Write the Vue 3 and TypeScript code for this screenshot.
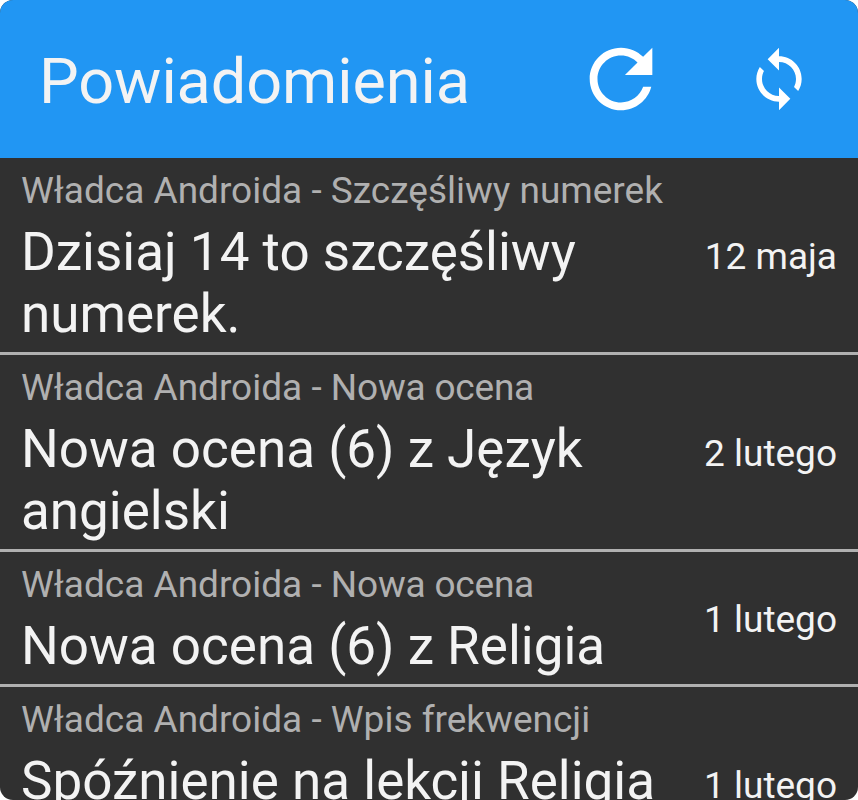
<script setup lang="ts">
interface Notice { student: string; kind: string; text: string; date: string; tight?: boolean }
const notices: Notice[] = [
  { student: 'Władca Androida', kind: 'Szczęśliwy numerek', text: 'Dzisiaj 14 to szczęśliwy numerek.', date: '12 maja' },
  { student: 'Władca Androida', kind: 'Nowa ocena', text: 'Nowa ocena (6) z Język angielski', date: '2 lutego', tight: true },
  { student: 'Władca Androida', kind: 'Nowa ocena', text: 'Nowa ocena (6) z Religia', date: '1 lutego', tight: true },
  { student: 'Władca Androida', kind: 'Wpis frekwencji', text: 'Spóźnienie na lekcji Religia', date: '1 lutego' },
]
</script>

<template>
  <main class="widget">
    <header class="bar">
      <h1>Powiadomienia</h1>
      <button class="refresh" aria-label="Odśwież">
        <svg width="94" height="94" viewBox="0 0 24 24"><path d="M17.65 6.35C16.2 4.9 14.21 4 12 4c-4.42 0-7.99 3.58-7.99 8s3.57 8 7.99 8c3.73 0 6.84-2.55 7.73-6h-2.08c-.82 2.33-3.04 4-5.65 4-3.31 0-6-2.69-6-6s2.69-6 6-6c1.66 0 3.14.69 4.22 1.78L13 11h7V4l-2.35 2.35z" /></svg>
      </button>
      <button class="sync" aria-label="Synchronizuj">
        <svg width="68" height="68" viewBox="0 0 24 24"><path d="M12 4V1L8 5l4 4V6c3.31 0 6 2.69 6 6 0 1.01-.25 1.97-.7 2.8l1.46 1.46C19.54 15.03 20 13.57 20 12c0-4.42-3.58-8-8-8zm0 14c-3.31 0-6-2.69-6-6 0-1.01.25-1.97.7-2.8L5.24 7.74C4.46 8.97 4 10.43 4 12c0 4.42 3.58 8 8 8v3l4-4-4-4v3z" /></svg>
      </button>
    </header>
    <ul class="list">
      <li v-for="(n, i) in notices" :key="i" class="item">
        <div class="body">
          <p class="source">{{ n.student }} - <span :class="{ tight: n.tight }">{{ n.kind }}</span></p>
          <p class="text">{{ n.text }}</p>
        </div>
        <time class="date">{{ n.date }}</time>
      </li>
    </ul>
  </main>
</template>

<style>
body { margin: 0; background: #fff; }
</style>

<style scoped>
.widget {
  width: 858px;
  height: 800px;
  overflow: hidden;
  border-radius: 13px;
  background: #303030;
  color: #f3f3f3;
  font-family: Roboto, sans-serif;
}
.bar {
  display: flex;
  align-items: center;
  box-sizing: border-box;
  height: 158px;
  padding-left: 39px;
  background: #2196f3;
}
h1 {
  flex: 1;
  margin: 0;
  font-size: 63px;
  line-height: 74px;
  font-weight: 400;
  letter-spacing: -0.08px;
  padding-top: 6px;
}
button {
  display: flex;
  align-items: center;
  justify-content: center;
  width: 158px;
  height: 158px;
  padding: 0;
  border: 0;
  background: none;
}
svg { display: block; fill: #fff; }
.list { margin: 0; padding: 0; list-style: none; }
.item {
  display: flex;
  align-items: center;
  justify-content: space-between;
  box-sizing: border-box;
  padding: 11px 21px 7px;
  border-bottom: 3px solid #b0b0b0;
}
.item:last-child { min-height: 197px; }
.body { align-self: flex-start; width: 660px; }
p { margin: 0; }
.source { font-size: 37px; line-height: 43px; color: #b0b0b0; }
.tight { letter-spacing: -0.2px; }
.text { margin-top: 9px; font-size: 53px; line-height: 62px; }
.date { padding-bottom: 1px; font-size: 37px; line-height: 43px; white-space: nowrap; }
</style>
